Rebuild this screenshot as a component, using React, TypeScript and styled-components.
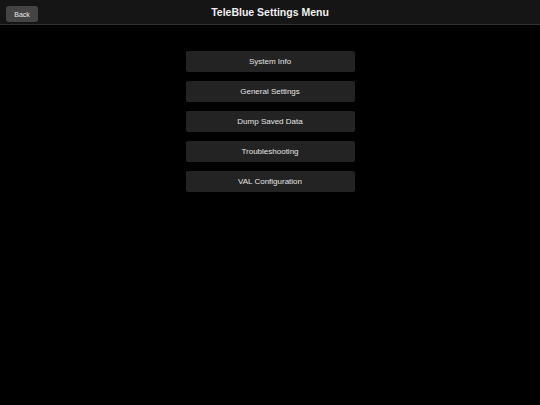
import React from 'react';
import styled, { createGlobalStyle } from 'styled-components';

const GlobalStyle = createGlobalStyle`
  html, body {
    margin: 0;
    padding: 0;
    background: #000000;
    font-family: "Liberation Sans", Arial, sans-serif;
  }
`;

const menuItems = [
  'System Info',
  'General Settings',
  'Dump Saved Data',
  'Troubleshooting',
  'VAL Configuration',
];

const App = () => {
  return (
    <>
      <GlobalStyle />
      <Page>
        <Header>
          <BackButton>Back</BackButton>
          <Title>TeleBlue Settings Menu</Title>
        </Header>
        <Menu>
          {menuItems.map((item) => (
            <MenuButton key={item}>{item}</MenuButton>
          ))}
        </Menu>
      </Page>
    </>
  );
};

export default App;

const Page = styled.div`
  width: 540px;
  height: 405px;
  background: #000000;
  display: flex;
  flex-direction: column;
`;

const Header = styled.div`
  position: relative;
  display: flex;
  align-items: center;
  justify-content: center;
  height: 24px;
  background: #151515;
  border-bottom: 1px solid #333333;
  box-sizing: content-box;
`;

const BackButton = styled.button`
  position: absolute;
  left: 6px;
  top: 6px;
  width: 32px;
  height: 16px;
  padding: 0;
  border: none;
  border-radius: 3px;
  background: #444444;
  color: #e8e8e8;
  font-family: "Liberation Sans", Arial, sans-serif;
  font-size: 7px;
`;

const Title = styled.h1`
  margin: 0;
  color: #f0f0f0;
  font-size: 10.5px;
  font-weight: bold;
`;

const Menu = styled.div`
  display: flex;
  flex-direction: column;
  align-items: center;
  gap: 9px;
  padding-top: 26px;
`;

const MenuButton = styled.button`
  width: 169px;
  height: 21px;
  padding: 0;
  border: none;
  border-radius: 2px;
  background: #232323;
  color: #e4e4e4;
  font-family: "Liberation Sans", Arial, sans-serif;
  font-size: 8px;
`;
